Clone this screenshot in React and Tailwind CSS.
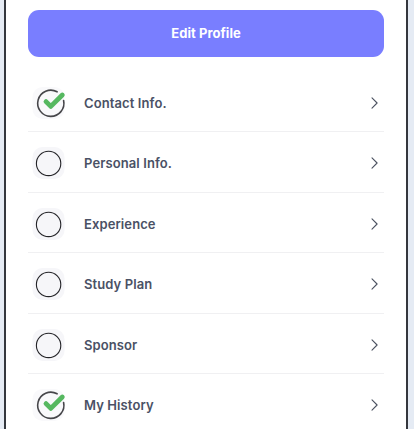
import clsx from 'clsx';

const sections = [
    { label: 'Contact Info.', done: true },
    { label: 'Personal Info.', done: false },
    { label: 'Experience', done: false },
    { label: 'Study Plan', done: false },
    { label: 'Sponsor', done: false },
    { label: 'My History', done: true },
];

function StatusIcon({ done }) {
    return (
        <svg className="-mt-[0.6px] ml-1 h-9 w-9 shrink-0" viewBox="0 0 36 36" fill="none">
            <rect x="0.5" y="2" width="32" height="32" rx="10" fill={done ? '#f9f9fb' : '#f6f6f9'} />
            {done ? (
                <>
                    <path
                        d="M25.1 6.8A13.1 13.1 0 1 0 31.6 15.5"
                        stroke="#46464a"
                        strokeWidth="1.6"
                        strokeLinecap="round"
                    />
                    <path
                        d="M14 16.6L18.8 21.4L30.3 10"
                        stroke="#56b860"
                        strokeWidth="4.8"
                        strokeLinecap="round"
                        strokeLinejoin="round"
                    />
                </>
            ) : (
                <circle cx="16.6" cy="18.4" r="12.2" stroke="#232327" strokeWidth="1.1" />
            )}
        </svg>
    );
}

function Chevron() {
    return (
        <svg className="-mt-[0.6px] mr-[5px] h-3 w-2 shrink-0" viewBox="0 0 8 12" fill="none">
            <path d="M1 0.9L6.1 6L1 11.1" stroke="#4b5160" strokeWidth="1.1" strokeLinecap="round" strokeLinejoin="round" />
        </svg>
    );
}

export default function App() {
    return (
        <div className="h-[429px] w-[414px] overflow-hidden bg-[#e5ebf4] pr-[6px] pl-1 font-['Inter',sans-serif]">
            <div className="h-full border-x-2 border-[#34373d] bg-white px-[22px] pt-[10px]">
                <button className="block h-[47px] w-full rounded-[11px] bg-[#797eff] text-[13px] font-bold tracking-[0.05px] text-white">
                    Edit Profile
                </button>
                <ul className="mt-[14.5px]">
                    {sections.map(({ label, done }, i) => (
                        <li
                            key={label}
                            className={clsx(
                                'flex h-[60.5px] items-center border-b pt-1',
                                i < sections.length - 1 ? 'border-[#f0f0f2]' : 'border-transparent'
                            )}
                        >
                            <StatusIcon done={done} />
                            <span className="ml-4 flex-1 text-[13px] font-semibold tracking-[0.1px] text-[#4a5165]">{label}</span>
                            <Chevron />
                        </li>
                    ))}
                </ul>
            </div>
        </div>
    );
}
